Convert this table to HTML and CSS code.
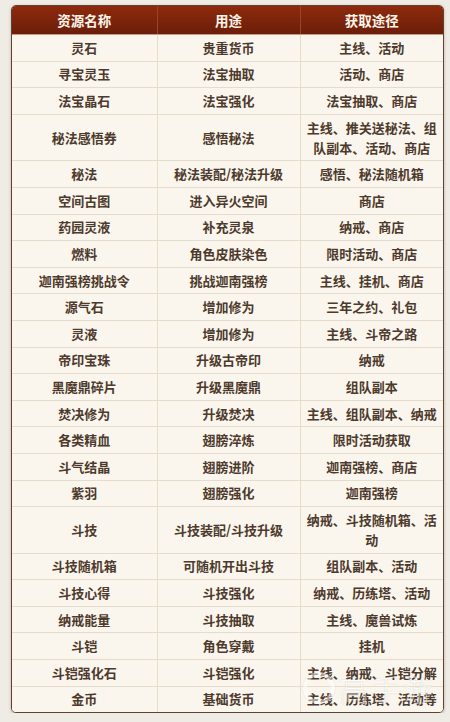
FILE: index.html
```html
<!DOCTYPE html>
<html lang="zh">
<head>
<meta charset="utf-8">
<title>资源表</title>
<link rel="stylesheet" href="styles.css">
</head>
<body>
<div class="page">
  <div class="card">
    <table class="res">
      <colgroup><col class="c1"><col class="c2"><col class="c3"></colgroup>
      <thead>
        <tr><th>资源名称</th><th>用途</th><th>获取途径</th></tr>
      </thead>
      <tbody>
        <tr><td>灵石</td><td>贵重货币</td><td>主线、活动</td></tr>
        <tr><td>寻宝灵玉</td><td>法宝抽取</td><td>活动、商店</td></tr>
        <tr><td>法宝晶石</td><td>法宝强化</td><td>法宝抽取、商店</td></tr>
        <tr><td>秘法感悟券</td><td>感悟秘法</td><td>主线、推关送秘法、组队副本、活动、商店</td></tr>
        <tr><td>秘法</td><td>秘法装配/秘法升级</td><td>感悟、秘法随机箱</td></tr>
        <tr><td>空间古图</td><td>进入异火空间</td><td>商店</td></tr>
        <tr><td>药园灵液</td><td>补充灵泉</td><td>纳戒、商店</td></tr>
        <tr><td>燃料</td><td>角色皮肤染色</td><td>限时活动、商店</td></tr>
        <tr><td>迦南强榜挑战令</td><td>挑战迦南强榜</td><td>主线、挂机、商店</td></tr>
        <tr><td>源气石</td><td>增加修为</td><td>三年之约、礼包</td></tr>
        <tr><td>灵液</td><td>增加修为</td><td>主线、斗帝之路</td></tr>
        <tr><td>帝印宝珠</td><td>升级古帝印</td><td>纳戒</td></tr>
        <tr><td>黑魔鼎碎片</td><td>升级黑魔鼎</td><td>组队副本</td></tr>
        <tr><td>焚决修为</td><td>升级焚决</td><td>主线、组队副本、纳戒</td></tr>
        <tr><td>各类精血</td><td>翅膀淬炼</td><td>限时活动获取</td></tr>
        <tr><td>斗气结晶</td><td>翅膀进阶</td><td>迦南强榜、商店</td></tr>
        <tr><td>紫羽</td><td>翅膀强化</td><td>迦南强榜</td></tr>
        <tr><td>斗技</td><td>斗技装配/斗技升级</td><td>纳戒、斗技随机箱、活动</td></tr>
        <tr><td>斗技随机箱</td><td>可随机开出斗技</td><td>组队副本、活动</td></tr>
        <tr><td>斗技心得</td><td>斗技强化</td><td>纳戒、历练塔、活动</td></tr>
        <tr><td>纳戒能量</td><td>斗技抽取</td><td>主线、魔兽试炼</td></tr>
        <tr><td>斗铠</td><td>角色穿戴</td><td>挂机</td></tr>
        <tr><td>斗铠强化石</td><td>斗铠强化</td><td>主线、纳戒、斗铠分解</td></tr>
        <tr><td>金币</td><td>基础货币</td><td>主线、历练塔、活动等</td></tr>
      </tbody>
    </table>
    <div class="watermark"><span class="wm-logo"></span><span class="wm-text">高手游</span></div>
  </div>
</div>
</body>
</html>
```

FILE: styles.css
```css
html, body {
  margin: 0;
  padding: 0;
}
body {
  background: #efebe5;
  font-family: "Noto Sans CJK SC", "Noto Sans", sans-serif;
}
.page {
  padding: 5px 6px 0 11px;
}
.card {
  position: relative;
  width: 431px;
  border: 1.5px solid #5e4331;
  border-radius: 5px;
  overflow: hidden;
  background: #faf6ee;
  box-shadow: 0 1px 3px rgba(80, 60, 40, 0.35);
}
.res {
  width: 100%;
  border-collapse: collapse;
  table-layout: fixed;
}
.c1 { width: 145px; }
.c2 { width: 143px; }
.c3 { width: auto; }
.res th {
  height: 28px;
  padding: 0 4px;
  background: linear-gradient(#8d2a0d, #6b1e0a);
  color: #fff6ea;
  font-size: 13.5px;
  font-weight: 700;
  text-align: center;
  border-left: 1px solid #9a4428;
  border-bottom: 1px solid #c79b84;
}
.res th:first-child { border-left: none; }
.res td {
  padding: 2.8px 4px;
  line-height: 20px;
  font-size: 13px;
  font-weight: 700;
  color: #4d3a2c;
  text-align: center;
  border-left: 1px solid #e7dccb;
  border-top: 1px solid #e7dccb;
  background: #faf6ee;
}
.res td:first-child { border-left: none; }
.res tbody tr:first-child td { border-top: none; }
.watermark {
  position: absolute;
  right: 8px;
  bottom: 2px;
  display: flex;
  align-items: center;
  gap: 4px;
  opacity: 0.5;
  pointer-events: none;
}
.wm-logo {
  width: 24px;
  height: 24px;
  border-radius: 50%;
  border: 4px solid #fff;
  box-shadow: 0 0 1px #999;
}
.wm-text {
  font-size: 30px;
  font-weight: 300;
  color: #fff;
  text-shadow: 0 0 1px #8a8a8a;
  letter-spacing: 2px;
}
```
